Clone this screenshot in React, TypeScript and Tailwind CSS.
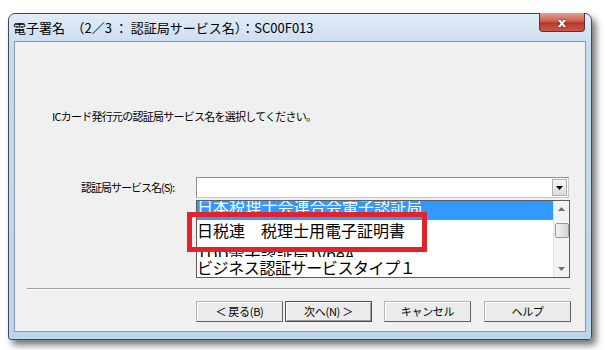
import React from "react";

const jp = "font-['Noto_Sans_CJK_JP','Noto_Sans',sans-serif]";

const Arrow = ({ dir, color }: { dir: "up" | "down"; color: string }) => (
  <svg width="7" height="4" viewBox="0 0 7 4">
    {dir === "down" ? (
      <path d="M0 0 H7 L3.5 4 Z" fill={color} />
    ) : (
      <path d="M0 4 H7 L3.5 0 Z" fill={color} />
    )}
  </svg>
);

const Button = ({ label, primary }: { label: string; primary?: boolean }) => (
  <div
    className={`w-[87px] h-[21px] flex items-center justify-center text-[11px] tracking-[-0.3px] text-black bg-[#ebebeb] border ${
      primary
        ? "border-[#505050] shadow-[inset_1px_1px_0_#ffffff,inset_-1px_-1px_0_#9a9a9a]"
        : "border-[#b4b4b4] border-r-[#5f5f5f] border-b-[#5f5f5f] shadow-[inset_1px_1px_0_#ffffff]"
    }`}
  >
    {label}
  </div>
);

export default function App() {
  return (
    <div className={`w-[605px] h-[350px] bg-white overflow-hidden ${jp}`}>
      <div className="ml-[8px] mt-[13px] w-[584px] h-[327px] relative flex flex-col rounded-t-[7px] rounded-b-[3px] border border-[#3f4b57] bg-[linear-gradient(180deg,#e1ecf7_0%,#c8dcf0_10%,#bdd5ed_100%)] shadow-[4px_5px_7px_rgba(0,0,0,0.55)]">
        {/* title bar */}
        <div className="h-[27px] flex items-center pl-[4px] text-[13px] text-black">
          電子署名　（2／3 ： 認証局サービス名）：SC00F013
        </div>
        <div className="absolute top-[-1px] right-[6px] w-[46px] h-[19px] rounded-b-[4px] border border-[#6b2a26] border-t-0 bg-[linear-gradient(180deg,#e3a193_0%,#cc6150_45%,#b8382a_55%,#c9584a_100%)] flex items-center justify-center">
          <span className="text-white text-[13px] font-bold leading-none font-['DejaVu_Sans',sans-serif] [text-shadow:0_0_2px_#4a1010]">
            x
          </span>
        </div>

        {/* client area */}
        <div className="mx-[5px] h-[291px] relative border border-[#8497ab] bg-[#f0f0f0] flex flex-col">
          <div className="pt-[66px] pl-[37px] h-[82px] text-[11px] leading-[16px] tracking-[-0.75px] text-black">
            ICカード発行元の認証局サービス名を選択してください。
          </div>

          <div className="mt-[53px] flex items-center">
            <div className="w-[181px] pl-[66px] text-[11px] tracking-[-1px] text-black">
              認証局サービス名(S):
            </div>
            <div className="w-[373px] h-[21px] bg-white border border-[#8e8e8e] border-r-[#c8c8c8] border-b-[#c8c8c8] flex justify-end items-center pr-[1px]">
              <div className="w-[15px] h-[17px] flex items-center justify-center bg-[linear-gradient(180deg,#f6f6f6,#dcdcdc)] border border-[#b0b0b0]">
                <Arrow dir="down" color="#000" />
              </div>
            </div>
          </div>

          {/* list box */}
          <div className="mt-[2px] ml-[181px] w-[374px] h-[78px] border border-[#5c5c5c] bg-white flex text-[16px] text-black">
            <div className="flex-1 flex flex-col">
              <div className="h-[19px] overflow-hidden bg-[#3399ff] text-white">
                <div className="leading-[20px] -mt-[5px] tracking-[0.1px]">日本税理士会連合会電子認証局</div>
              </div>
              <div className="h-[20px] overflow-hidden">
                <div className="leading-[20px]">日税連　税理士用電子証明書</div>
              </div>
              <div className="h-[17px] overflow-hidden">
                <div className="leading-[20px] mt-[4px]">TDD電子認証局TypeA</div>
              </div>
              <div className="h-[20px] overflow-hidden">
                <div className="leading-[20px] tracking-[-0.4px]">ビジネス認証サービスタイプ１</div>
              </div>
            </div>
            <div className="w-[16px] bg-[#f3f3f3] border-l border-[#e2e2e2] flex flex-col items-center">
              <div className="h-[16px] flex items-center justify-center">
                <Arrow dir="up" color="#6e6e6e" />
              </div>
              <div className="mt-[6px] w-[14px] h-[15px] rounded-[2px] border border-[#9a9a9a] bg-[linear-gradient(90deg,#f2f2f2,#d6d6d6)]" />
              <div className="flex-1" />
              <div className="h-[16px] flex items-center justify-center">
                <Arrow dir="down" color="#6e6e6e" />
              </div>
            </div>
          </div>

          {/* separator */}
          <div className="mt-[10px] ml-[12px] w-[543px] h-[2px] border-t border-[#a0a0a0] border-b border-b-white" />

          {/* buttons */}
          <div className="mt-[11px] ml-[181px] flex">
            <Button label="＜ 戻る(B)" />
            <div className="w-[2px]" />
            <Button label="次へ(N) ＞" primary />
            <div className="w-[12px]" />
            <Button label="キャンセル" />
            <div className="w-[13px]" />
            <Button label="ヘルプ" />
          </div>

          {/* red highlight overlay */}
          <div className="absolute left-[172px] top-[170px] w-[240px] h-[40px] border-[5px] border-[#e3232c]" />
        </div>
      </div>
    </div>
  );
}
